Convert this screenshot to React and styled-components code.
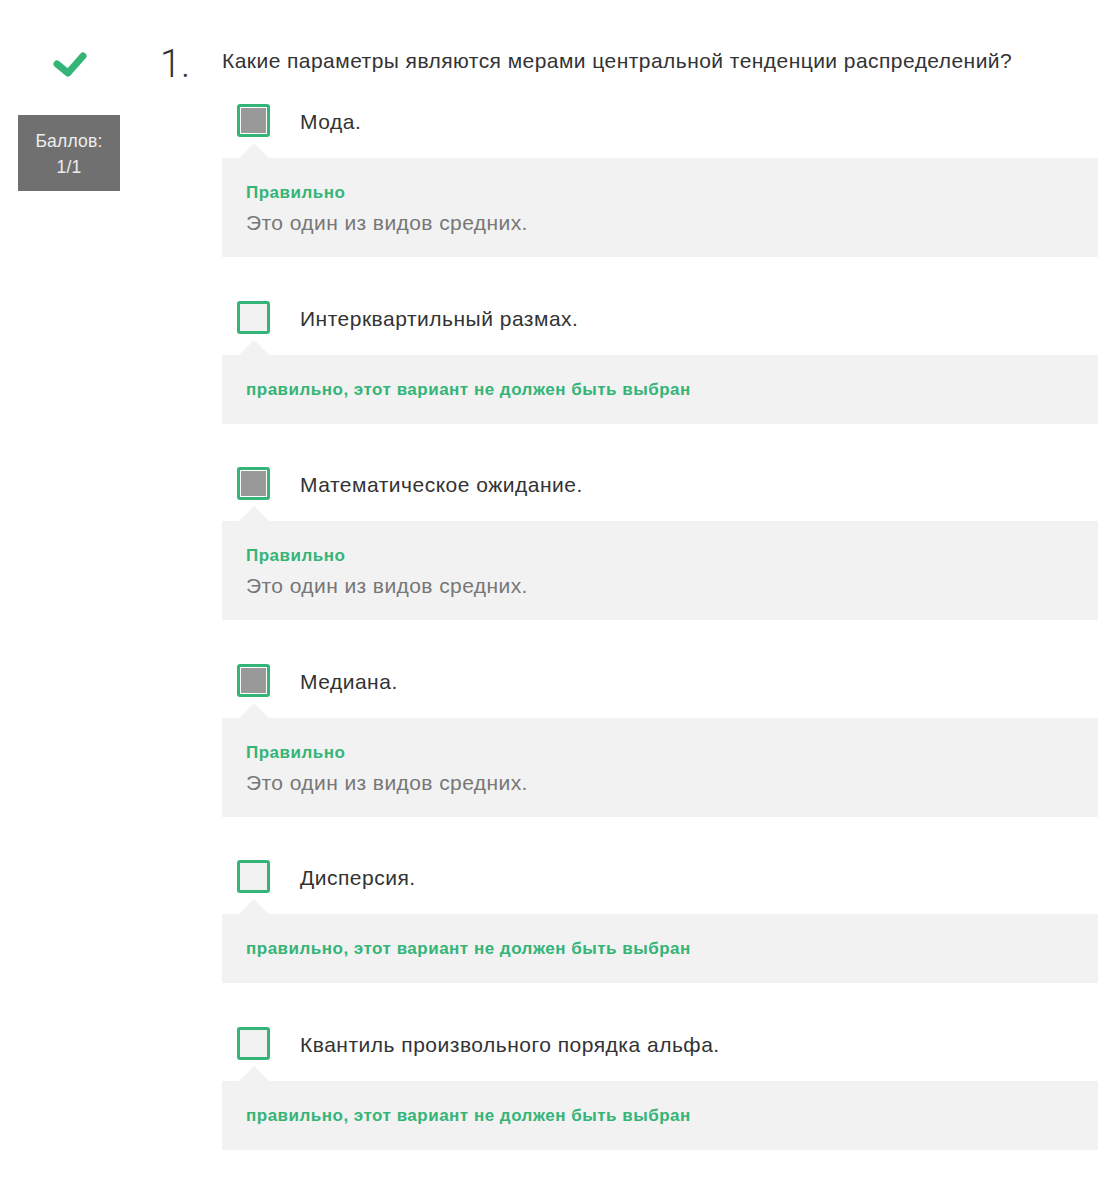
import React from "react";
import styled, { createGlobalStyle } from "styled-components";

const GREEN = "#35b478";

const Global = createGlobalStyle`
  html, body { margin: 0; padding: 0; background: #fff; }
  body { font-family: "Liberation Sans", Arial, sans-serif; color: #333; }
`;

const Page = styled.div`
  display: flex;
  align-items: flex-start;
  padding-right: 20px;
`;

const Side = styled.div`
  width: 102px;
  margin-left: 18px;
  padding-top: 48px;
  display: flex;
  flex-direction: column;
  align-items: center;
`;

const Check = styled.svg`
  width: 40px;
  height: 32px;
  display: block;
`;

const Score = styled.div`
  margin-top: 35px;
  width: 102px;
  height: 76px;
  box-sizing: border-box;
  background: #707070;
  color: #eee;
  font-size: 17.5px;
  letter-spacing: 0.2px;
  line-height: 26px;
  text-align: center;
  padding-top: 13px;
`;

const Num = styled.div`
  width: 62px;
  margin-left: 40px;
  margin-top: 45px;
  font-family: Roboto, "Liberation Sans", sans-serif;
  font-size: 38px;
  line-height: 38px;
  font-weight: 300;
  color: #333;
`;

const Content = styled.div`
  flex: 1;
  padding-top: 48px;
`;

const Question = styled.div`
  font-size: 21px;
  letter-spacing: 0.45px;
  line-height: 26px;
  color: #333;
  margin-bottom: 30px;
`;

const Option = styled.div`
  & + & { margin-top: 43.5px; }
`;

const Row = styled.div`
  display: flex;
  align-items: center;
  padding-left: 15px;
  margin-bottom: 21px;
`;

const Box = styled.div`
  width: 33px;
  height: 33px;
  box-sizing: border-box;
  border: 3px solid ${GREEN};
  border-radius: 3px;
  background: ${(p) => (p.$checked ? "#999" : "#f2f2f2")};
  box-shadow: ${(p) => (p.$checked ? "inset 0 0 0 1px #fff" : "none")};
  flex-shrink: 0;
`;

const Label = styled.div`
  margin-left: 30px;
  padding-top: 3px;
  font-size: 21px;
  letter-spacing: 0.5px;
  line-height: 26px;
  color: #333;
`;

const Feedback = styled.div`
  position: relative;
  background: #f2f2f2;
  padding: 25px 24px 24px;
  &::before {
    content: "";
    position: absolute;
    left: 17px;
    top: -15px;
    border-left: 15px solid transparent;
    border-right: 15px solid transparent;
    border-bottom: 15px solid #f2f2f2;
  }
`;

const Title = styled.div`
  color: ${GREEN};
  font-weight: 700;
  font-size: 17px;
  letter-spacing: 0.5px;
  line-height: 20px;
`;

const Note = styled.div`
  margin-top: 9px;
  color: #777;
  font-size: 21px;
  letter-spacing: 0.42px;
  line-height: 21px;
`;

const options = [
  { label: "Мода.", checked: true },
  { label: "Интерквартильный размах.", checked: false },
  { label: "Математическое ожидание.", checked: true },
  { label: "Медиана.", checked: true },
  { label: "Дисперсия.", checked: false },
  { label: "Квантиль произвольного порядка альфа.", checked: false },
];

export default function App() {
  return (
    <>
      <Global />
      <Page>
        <Side>
          <Check viewBox="0 0 40 32">
            <polyline
              points="8,16 19,25 34,8"
              fill="none"
              stroke={GREEN}
              strokeWidth="7"
              strokeLinecap="round"
              strokeLinejoin="round"
            />
          </Check>
          <Score>
            Баллов:
            <br />
            1/1
          </Score>
        </Side>
        <Num>1.</Num>
        <Content>
          <Question>
            Какие параметры являются мерами центральной тенденции распределений?
          </Question>
          {options.map((o, i) => (
            <Option key={i}>
              <Row>
                <Box $checked={o.checked} />
                <Label>{o.label}</Label>
              </Row>
              <Feedback>
                {o.checked ? (
                  <>
                    <Title>Правильно</Title>
                    <Note>Это один из видов средних.</Note>
                  </>
                ) : (
                  <Title>правильно, этот вариант не должен быть выбран</Title>
                )}
              </Feedback>
            </Option>
          ))}
        </Content>
      </Page>
    </>
  );
}
